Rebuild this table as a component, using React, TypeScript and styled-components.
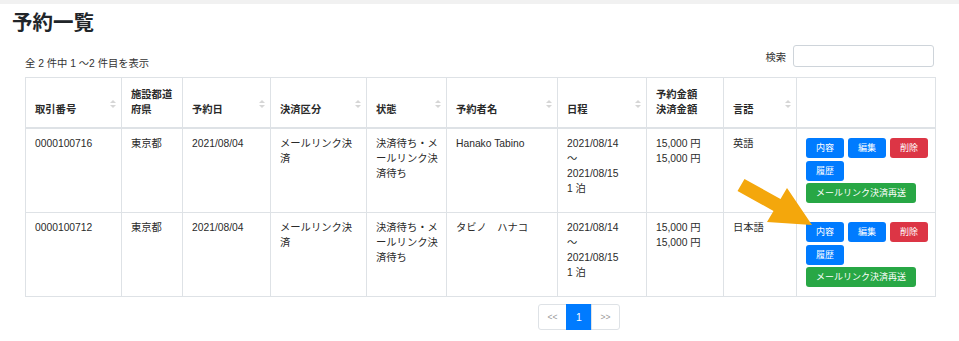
import React from 'react';
import styled, { createGlobalStyle } from 'styled-components';

const GlobalStyle = createGlobalStyle`
  body {
    margin: 0;
    background: #fff;
    color: #212529;
    font-family: "Liberation Sans", "Noto Sans CJK JP", sans-serif;
  }
`;

const TopStrip = styled.div`
  height: 4px;
  background: #f1f1f1;
`;

const Title = styled.h1`
  margin: 5px 0 0 12px;
  font-size: 20.5px;
  line-height: 28px;
  font-weight: 700;
  color: #212529;
`;

const Toolbar = styled.div`
  display: flex;
  justify-content: space-between;
  align-items: flex-end;
  margin-top: 8px;
  padding: 0 25px;
`;

const Info = styled.div`
  font-size: 10.3px;
  line-height: 15px;
  margin-bottom: -4px;
  color: #333;
`;

const Search = styled.label`
  display: flex;
  align-items: center;
  gap: 7px;
  font-size: 10.3px;
  color: #333;
`;

const SearchInput = styled.input`
  box-sizing: border-box;
  width: 141px;
  height: 22px;
  border: 1px solid #ced4da;
  border-radius: 3px;
  padding: 0 6px;
  outline: none;
`;

const TableWrap = styled.div`
  position: relative;
  margin: 10px 25px 0;
`;

const Table = styled.table`
  width: 910px;
  table-layout: fixed;
  border-collapse: collapse;
  font-size: 10.3px;
  line-height: 15px;
  color: #2a2a2a;
`;

const Th = styled.th<{ $sort: boolean }>`
  position: relative;
  border: 1px solid #dee2e6;
  border-bottom-width: 2px;
  padding: 9px ${(p) => (p.$sort ? '15px' : '5px')} 10px 9px;
  text-align: left;
  vertical-align: bottom;
  font-weight: 700;
`;

const SortIcon = styled.svg`
  position: absolute;
  right: 5px;
  top: 50%;
  margin-top: -3px;
`;

const Td = styled.td`
  border: 1px solid #dee2e6;
  padding: 7px 6px 9px 9px;
  vertical-align: top;
`;

const Actions = styled.div`
  display: flex;
  flex-wrap: wrap;
  gap: 2.5px 4px;
  margin-top: 2px;
`;

const Btn = styled.button<{ $tone: 'blue' | 'red' | 'green' }>`
  height: 20px;
  padding: 0 10px;
  border: 0;
  border-radius: 3px;
  font-family: inherit;
  font-size: 9px;
  line-height: 20px;
  color: #fff;
  background: ${(p) => (p.$tone === 'red' ? '#dc3545' : p.$tone === 'green' ? '#28a745' : '#007bff')};
`;

const Arrow = styled.svg`
  position: absolute;
  left: 710px;
  top: 98px;
  pointer-events: none;
`;

const Footer = styled.div`
  display: flex;
  padding-left: 538px;
  margin-top: 7px;
`;

const PageItem = styled.span<{ $active?: boolean }>`
  display: flex;
  align-items: center;
  justify-content: center;
  box-sizing: border-box;
  height: 26px;
  min-width: ${(p) => (p.$active ? '26px' : '29px')};
  margin-left: -1px;
  border: 1px solid ${(p) => (p.$active ? '#007bff' : '#dee2e6')};
  background: ${(p) => (p.$active ? '#007bff' : '#fff')};
  color: ${(p) => (p.$active ? '#fff' : '#999')};
  font-size: ${(p) => (p.$active ? '10.5px' : '8.5px')};

  &:first-child {
    margin-left: 0;
    border-radius: 3px 0 0 3px;
  }
  &:last-child {
    border-radius: 0 3px 3px 0;
  }
`;

const columns = [
  { label: '取引番号', width: 96, sort: true },
  { label: '施設都道\n府県', width: 61, sort: false },
  { label: '予約日', width: 88, sort: true },
  { label: '決済区分', width: 96, sort: true },
  { label: '状態', width: 80, sort: true },
  { label: '予約者名', width: 111, sort: true },
  { label: '日程', width: 89, sort: true },
  { label: '予約金額\n決済金額', width: 77, sort: false },
  { label: '言語', width: 73, sort: true },
  { label: '', width: 139, sort: false },
];

const rows = [
  { id: '0000100716', pref: '東京都', date: '2021/08/04', pay: 'メールリンク決済', status: '決済待ち・メールリンク決済待ち', name: 'Hanako Tabino', lang: '英語' },
  { id: '0000100712', pref: '東京都', date: '2021/08/04', pay: 'メールリンク決済', status: '決済待ち・メールリンク決済待ち', name: 'タビノ　ハナコ', lang: '日本語' },
];

function Lines({ text }: { text: string }) {
  return (
    <>
      {text.split('\n').map((line, i) => (
        <div key={i}>{line}</div>
      ))}
    </>
  );
}

function Sort() {
  return (
    <SortIcon width="6" height="8" viewBox="0 0 6 8">
      <path d="M3 0 L6 3 H0 Z" fill="#d6d6d6" />
      <path d="M3 8 L6 5 H0 Z" fill="#d6d6d6" />
    </SortIcon>
  );
}

export default function App() {
  return (
    <>
      <GlobalStyle />
      <TopStrip />
      <Title>予約一覧</Title>
      <Toolbar>
        <Info>全 2 件中 1 ～2 件目を表示</Info>
        <Search>
          検索
          <SearchInput type="search" />
        </Search>
      </Toolbar>
      <TableWrap>
        <Table>
          <colgroup>
            {columns.map((c, i) => (
              <col key={i} style={{ width: c.width }} />
            ))}
          </colgroup>
          <thead>
            <tr>
              {columns.map((c, i) => (
                <Th key={i} $sort={c.sort}>
                  <Lines text={c.label} />
                  {c.sort && <Sort />}
                </Th>
              ))}
            </tr>
          </thead>
          <tbody>
            {rows.map((r) => (
              <tr key={r.id}>
                <Td>{r.id}</Td>
                <Td>{r.pref}</Td>
                <Td>{r.date}</Td>
                <Td>{r.pay}</Td>
                <Td>{r.status}</Td>
                <Td>{r.name}</Td>
                <Td>
                  <Lines text={'2021/08/14\n～\n2021/08/15\n1 泊'} />
                </Td>
                <Td>
                  <Lines text={'15,000 円\n15,000 円'} />
                </Td>
                <Td>{r.lang}</Td>
                <Td>
                  <Actions>
                    <Btn $tone="blue">内容</Btn>
                    <Btn $tone="blue">編集</Btn>
                    <Btn $tone="red">削除</Btn>
                    <Btn $tone="blue">履歴</Btn>
                    <Btn $tone="green">メールリンク決済再送</Btn>
                  </Actions>
                </Td>
              </tr>
            ))}
          </tbody>
        </Table>
        <Arrow width="80" height="55" viewBox="0 0 80 55">
          <polygon
            points="9.5,4 45.5,24 52,13 77,50 32,47 38.5,36 2.5,16"
            fill="#f4a70c"
          />
        </Arrow>
      </TableWrap>
      <Footer>
        <PageItem>&lt;&lt;</PageItem>
        <PageItem $active>1</PageItem>
        <PageItem>&gt;&gt;</PageItem>
      </Footer>
    </>
  );
}
